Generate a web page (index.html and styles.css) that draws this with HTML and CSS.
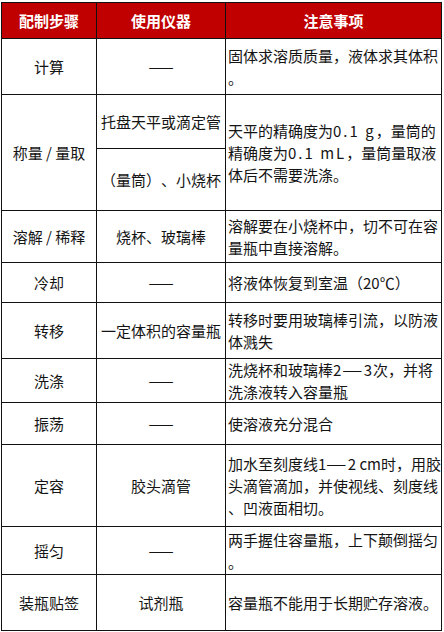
FILE: index.html
```html
<!DOCTYPE html>
<html lang="zh-CN">
<head>
<meta charset="utf-8">
<title>配制步骤</title>
<link rel="stylesheet" href="styles.css">
</head>
<body>
<div class="sheet">
  <div class="cell head"><span class="txt">配制步骤</span></div>
  <div class="cell head"><span class="txt">使用仪器</span></div>
  <div class="cell head"><span class="txt">注意事项</span></div>

  <div class="cell step"><span class="txt">计算</span></div>
  <div class="cell tool"><span class="txt">——</span></div>
  <div class="cell note"><span class="txt">固体求溶质质量，液体求其体积<br>。</span></div>

  <div class="cell step span2"><span class="txt">称量 / 量取</span></div>
  <div class="cell tool"><span class="txt">托盘天平或滴定管</span></div>
  <div class="cell note span2"><span class="txt">天平的精确度为<span class="lat-a">0.1 g</span>，量筒的<br>精确度为<span class="lat-b">0.1 mL</span>，量筒量取液<br>体后不需要洗涤。</span></div>
  <div class="cell tool"><span class="txt">（量筒）、小烧杯</span></div>

  <div class="cell step"><span class="txt">溶解 / 稀释</span></div>
  <div class="cell tool"><span class="txt">烧杯、玻璃棒</span></div>
  <div class="cell note"><span class="txt">溶解要在小烧杯中，切不可在容<br>量瓶中直接溶解。</span></div>

  <div class="cell step"><span class="txt">冷却</span></div>
  <div class="cell tool"><span class="txt">——</span></div>
  <div class="cell note"><span class="txt">将液体恢复到室温（20℃）</span></div>

  <div class="cell step"><span class="txt">转移</span></div>
  <div class="cell tool"><span class="txt">一定体积的容量瓶</span></div>
  <div class="cell note"><span class="txt">转移时要用玻璃棒引流，以防液<br>体溅失</span></div>

  <div class="cell step"><span class="txt">洗涤</span></div>
  <div class="cell tool"><span class="txt">——</span></div>
  <div class="cell note"><span class="txt">洗烧杯和玻璃棒<span class="lat-c">2<span class="dash">—</span>3</span>次，并将<br>洗涤液转入容量瓶</span></div>

  <div class="cell step"><span class="txt">振荡</span></div>
  <div class="cell tool"><span class="txt">——</span></div>
  <div class="cell note"><span class="txt">使溶液充分混合</span></div>

  <div class="cell step"><span class="txt">定容</span></div>
  <div class="cell tool"><span class="txt">胶头滴管</span></div>
  <div class="cell note"><span class="txt">加水至刻度线1<span class="dash">—</span>2 cm时，用胶<br>头滴管滴加，并使视线、刻度线<br>、凹液面相切。</span></div>

  <div class="cell step"><span class="txt">摇匀</span></div>
  <div class="cell tool"><span class="txt">——</span></div>
  <div class="cell note"><span class="txt">两手握住容量瓶，上下颠倒摇匀<br>。</span></div>

  <div class="cell step"><span class="txt">装瓶贴签</span></div>
  <div class="cell tool"><span class="txt">试剂瓶</span></div>
  <div class="cell note"><span class="txt">容量瓶不能用于长期贮存溶液。</span></div>
</div>
</body>
</html>
```

FILE: styles.css
```css
html, body {
  margin: 0;
  padding: 0;
  background: #ffffff;
}

.sheet {
  display: grid;
  grid-template-columns: 94px 128px 215px;
  grid-template-rows: 35px 55px 53px 61px 51px 39px 55px 43px 41px 81px 47px 55px;
  gap: 1px;
  padding: 1px;
  background: #111111;
  width: max-content;
  margin: 2px 0 0 1px;
}

.cell {
  background: #ffffff;
  display: flex;
  align-items: center;
  font-family: "Noto Sans CJK SC", "Noto Sans", sans-serif;
  font-size: 15px;
  line-height: 22px;
  color: #141414;
  white-space: nowrap;
  overflow: hidden;
  text-spacing-trim: space-all;
}

.txt {
  display: block;
}

.head {
  background: #c00000;
  color: #ffffff;
  font-weight: bold;
  justify-content: center;
}

.step,
.tool {
  justify-content: center;
}

.note {
  padding-left: 2px;
}

.span2 {
  grid-row: span 2;
}

/* wider Latin runs, as in the original rendering */
.lat-a {
  letter-spacing: 2px;
}

.lat-b {
  letter-spacing: 2px;
}

.lat-c {
  letter-spacing: 1px;
}

.dash {
  display: inline-block;
  letter-spacing: 0;
  transform: scaleX(1.53);
  transform-origin: left center;
  margin-right: 8px;
}
```
